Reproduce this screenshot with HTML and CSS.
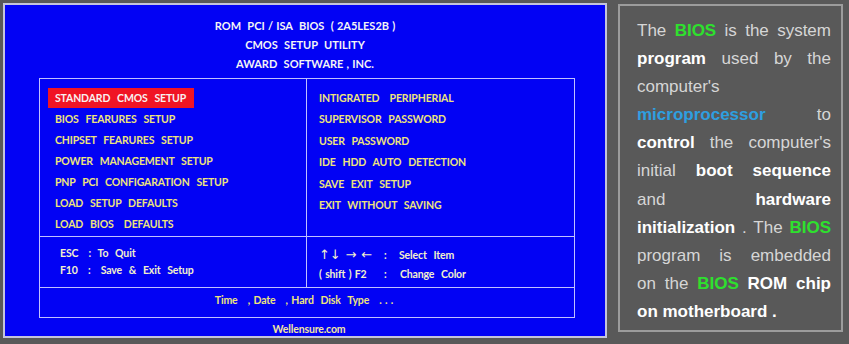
FILE: index.html
```html
<!DOCTYPE html>
<html lang="en">
<head>
    <meta charset="UTF-8">
    <meta name="viewport" content="width=device-width, initial-scale=1.0">
    <title>BIOS Setup Utility</title>
    <link rel="stylesheet" href="styles.css">
</head>
<body>
    <!-- BIOS screen -->
    <div class="bios">
        <div class="bios-header">
            <div class="line">ROM  PCI / ISA  BIOS  ( 2A5LES2B )</div>
            <div class="line">CMOS  SETUP  UTILITY</div>
            <div class="line">AWARD  SOFTWARE , INC.</div>
        </div>

        <div class="bios-box">
            <div class="menu menu-left">
                <div class="item selected">STANDARD  CMOS  SETUP</div>
                <div class="item">BIOS  FEARURES  SETUP</div>
                <div class="item">CHIPSET  FEARURES  SETUP</div>
                <div class="item">POWER  MANAGEMENT  SETUP</div>
                <div class="item">PNP  PCI  CONFIGARATION  SETUP</div>
                <div class="item">LOAD  SETUP  DEFAULTS</div>
                <div class="item">LOAD  BIOS   DEFAULTS</div>
            </div>
            <div class="menu menu-right">
                <div class="item">INTIGRATED   PERIPHERIAL</div>
                <div class="item">SUPERVISOR  PASSWORD</div>
                <div class="item">USER  PASSWORD</div>
                <div class="item">IDE  HDD  AUTO  DETECTION</div>
                <div class="item">SAVE  EXIT  SETUP</div>
                <div class="item">EXIT  WITHOUT  SAVING</div>
            </div>

            <div class="keys keys-left">
                <div class="line">ESC   :  To  Quit</div>
                <div class="line">F10   :   Save  &amp;  Exit  Setup</div>
            </div>
            <div class="keys keys-right">
                <span class="arrows">↑↓ → ←</span><span>:</span><span>Select  Item</span>
                <span class="line">( shift ) F2</span><span>:</span><span class="shift">Change  Color</span>
            </div>

            <div class="status">Time   , Date   , Hard  Disk  Type   . . .</div>
        </div>

        <div class="footer">Wellensure.com</div>
    </div>

    <!-- Description -->
    <div class="note">
        <p>
            The <b class="green">BIOS</b> is the system <b>program</b> used by the computer's
            <b class="blue">microprocessor</b> to <b>control</b> the computer's initial
            <b>boot sequence</b> and <b>hardware initialization</b> . The <b class="green">BIOS</b>
            program is embedded on&nbsp;the <b class="green">BIOS</b> <b>ROM chip on motherboard .</b>
        </p>
    </div>
</body>
</html>
```

FILE: styles.css
```css
body {
    margin: 0;
    padding: 3px;
    background-color: #595959;
    display: flex;
    align-items: flex-start;
    height: 344px;
    box-sizing: border-box;
    overflow: hidden;
}
.bios {
    width: 604px;
    height: 335px;
    box-sizing: border-box;
    border: 2px solid #c4c4dc;
    background-color: #0202f4;
    font-family: Lato, "Liberation Sans", sans-serif;
    font-weight: 700;
    font-size: 10.5px;
    letter-spacing: -0.15px;
    word-spacing: 1px;
    color: #eee47c;
}
.line,
.item,
.keys-right span,
.status,
.footer {
    white-space: pre;
}
.bios-header {
    padding-top: 11px;
    text-align: center;
    color: #f4f4f4;
    line-height: 19px;
    font-size: 11px;
    letter-spacing: 0;
    word-spacing: 0.5px;
}
.bios-box {
    margin: 5px 30px 0 34px;
    height: 238px;
    border: 1px solid #c0c0ff;
    display: grid;
    grid-template-columns: 267px 1fr;
    grid-template-rows: 158px 51px 1fr;
}
.menu {
    padding-top: 9px;
    border-bottom: 1px solid #c0c0ff;
}
.menu-left {
    padding-left: 8px;
    border-right: 1px solid #c0c0ff;
}
.menu-right {
    padding-left: 12px;
}
.item {
    line-height: 21px;
    padding: 0 7px;
}
.menu-right .item {
    padding: 0;
    line-height: 21.4px;
}
.item.selected {
    display: inline-block;
    background-color: #f01424;
    color: #f8f0f0;
    line-height: 20px;
    margin-bottom: 1px;
    padding-right: 8px;
}
.keys {
    color: #f2f0cc;
    border-bottom: 1px solid #c0c0ff;
}
.keys-left {
    padding: 8px 0 0 20px;
    line-height: 17px;
    border-right: 1px solid #c0c0ff;
}
.keys-right {
    padding: 8px 0 0 12px;
    display: grid;
    grid-template-columns: 65px 15px auto;
    grid-auto-rows: 19px;
    align-items: center;
    justify-content: start;
}
.arrows {
    font-family: "DejaVu Sans", sans-serif;
    font-weight: 400;
    font-size: 13px;
}
.shift {
    padding-left: 1px;
}
.status {
    grid-column: 1 / 3;
    text-align: center;
    line-height: 25px;
    padding-right: 6px;
}
.footer {
    text-align: center;
    line-height: 20px;
    margin-top: 1px;
    padding-left: 8px;
    color: #f2e6a0;
}
.note {
    margin: 1px 0 0 11px;
    width: 225px;
    height: 328px;
    box-sizing: border-box;
    border: 2px solid #9c9c9c;
    padding: 11px 10px 0 17px;
    background-color: #595959;
}
.note p {
    margin: 0;
    font-family: "Liberation Sans", Arial, sans-serif;
    font-size: 17px;
    line-height: 28.1px;
    text-align: justify;
    color: #d6d6d6;
}
.note b {
    color: #fff;
}
.note b.green {
    color: #2ee02e;
}
.note b.blue {
    color: #2e9fe0;
}
```
